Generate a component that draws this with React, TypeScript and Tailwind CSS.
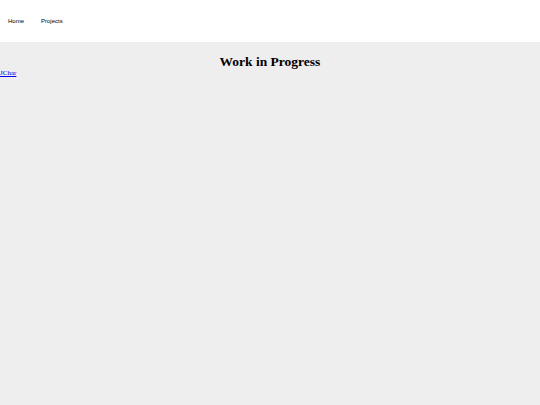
export default function App() {
  return (
    <div className="min-h-[405px] flex flex-col bg-[#eeeeee]">
      <header className="h-[42px] bg-white flex items-center pl-2">
        <nav className="flex gap-[17px] font-['Liberation_Sans',Arial,sans-serif] text-[6px] text-black">
          <a href="#">Home</a>
          <a href="#">Projects</a>
        </nav>
      </header>
      <main className="flex-1 font-['Liberation_Serif','Times_New_Roman',serif]">
        <h1 className="text-center text-[13.5px] font-bold leading-[15px] mt-[12px]">Work in Progress</h1>
        <a href="#" className="block text-[7px] leading-[8px] text-[#0000ee] underline">JChar</a>
      </main>
    </div>
  );
}
